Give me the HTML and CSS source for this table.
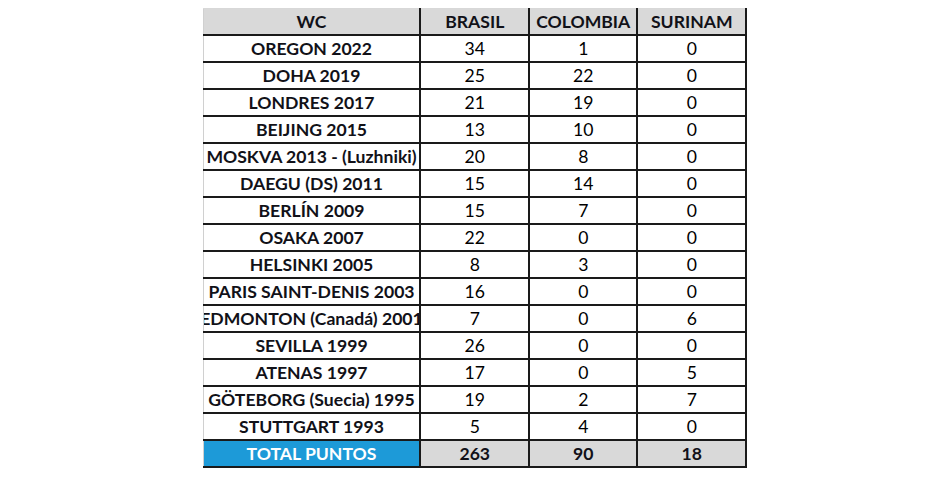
FILE: index.html
```html
<!DOCTYPE html>
<html lang="es">
<head>
<meta charset="utf-8">
<title>WC puntos</title>
<link rel="stylesheet" href="styles.css">
</head>
<body>
<table class="points">
  <colgroup>
    <col class="c-wc"><col class="c-num"><col class="c-num2"><col class="c-num">
  </colgroup>
  <thead>
    <tr><th>WC</th><th>BRASIL</th><th>COLOMBIA</th><th>SURINAM</th></tr>
  </thead>
  <tbody>
    <tr><td class="name">OREGON 2022</td><td>34</td><td>1</td><td>0</td></tr>
    <tr><td class="name">DOHA 2019</td><td>25</td><td>22</td><td>0</td></tr>
    <tr><td class="name">LONDRES 2017</td><td>21</td><td>19</td><td>0</td></tr>
    <tr><td class="name">BEIJING 2015</td><td>13</td><td>10</td><td>0</td></tr>
    <tr><td class="name">MOSKVA 2013 - (Luzhniki)</td><td>20</td><td>8</td><td>0</td></tr>
    <tr><td class="name">DAEGU (DS) 2011</td><td>15</td><td>14</td><td>0</td></tr>
    <tr><td class="name">BERLÍN 2009</td><td>15</td><td>7</td><td>0</td></tr>
    <tr><td class="name">OSAKA 2007</td><td>22</td><td>0</td><td>0</td></tr>
    <tr><td class="name">HELSINKI 2005</td><td>8</td><td>3</td><td>0</td></tr>
    <tr><td class="name">PARIS SAINT-DENIS 2003</td><td>16</td><td>0</td><td>0</td></tr>
    <tr><td class="name"><div class="clip"><span>EDMONTON (Canadá) 2001</span></div></td><td>7</td><td>0</td><td>6</td></tr>
    <tr><td class="name">SEVILLA 1999</td><td>26</td><td>0</td><td>0</td></tr>
    <tr><td class="name">ATENAS 1997</td><td>17</td><td>0</td><td>5</td></tr>
    <tr><td class="name">GÖTEBORG (Suecia) 1995</td><td>19</td><td>2</td><td>7</td></tr>
    <tr><td class="name">STUTTGART 1993</td><td>5</td><td>4</td><td>0</td></tr>
  </tbody>
  <tfoot>
    <tr><th class="total-label">TOTAL PUNTOS</th><th>263</th><th>90</th><th>18</th></tr>
  </tfoot>
</table>
</body>
</html>
```

FILE: styles.css
```css
html, body {
  background: #ffffff;
}
body {
  margin: 8px 0 0 0;
}
.points {
  margin: 0 auto;
  border-collapse: collapse;
  table-layout: fixed;
  width: 543px;
  font-family: Lato, "Open Sans", "Liberation Sans", sans-serif;
  font-weight: 700;
  font-size: 17.6px;
  color: #111118;
  border-left: 1px solid #d0d0d0;
  border-top: 1px solid #d8d8d8;
}
.c-wc { width: 217px; }
.c-num { width: 109px; }
.c-num2 { width: 108px; }
.points th,
.points td {
  height: 25px;
  padding: 0;
  text-align: center;
  vertical-align: middle;
  border: 2px solid #1a1a1a;
  white-space: nowrap;
  overflow: hidden;
}
.points thead th {
  background: #d9d9d9;
  border-top: 1px solid #d8d8d8;
  font-weight: 700;
}
.points tr > :first-child {
  border-left: 1px solid #d0d0d0;
}
.points .clip {
  display: flex;
  justify-content: center;
  width: 100%;
  overflow: hidden;
}
.points .clip span {
  flex: none;
}
.points tfoot th {
  background: #d9d9d9;
  font-weight: 700;
}
.points tfoot .total-label {
  background: #1d9ad8;
  color: #ffffff;
}
.points td:not(.name) {
  font-weight: 400;
  color: #000000;
}
```
